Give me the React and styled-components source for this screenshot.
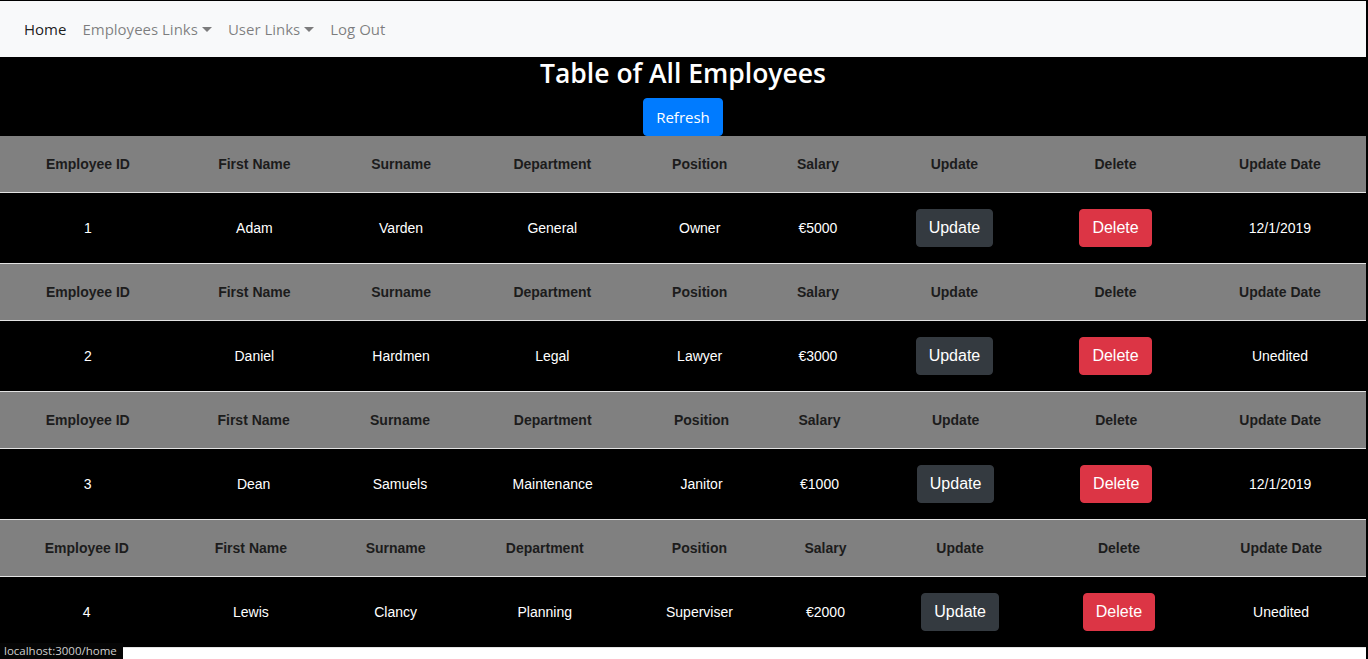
import styled, {createGlobalStyle} from "styled-components";

const GlobalStyle = createGlobalStyle`
    html {
        background: #000;
    }
    body {
        margin: 0 2px 0 0;
        min-height: 100vh;
        background: #fff;
        font-family: "Open Sans", "Noto Sans", sans-serif;
        font-size: 16px;
        line-height: 1.5;
        color: #212529;
    }
`

const Page = styled.div`
    border-top: 1px solid #000;
`

const Navbar = styled.nav`
    display: flex;
    align-items: center;
    padding: 8px 16px;
    background: #f8f9fa;
`

const NavLink = styled.a`
    display: flex;
    align-items: center;
    padding: 8px;
    font-size: 15px;
    line-height: 24px;
    color: ${props => props.active ? "rgba(0, 0, 0, 0.9)" : "rgba(0, 0, 0, 0.5)"};
    text-decoration: none;
    cursor: pointer;
`

const Caret = styled.span`
    display: inline-block;
    margin-left: 4px;
    border-top: 5px solid currentColor;
    border-left: 5px solid transparent;
    border-right: 5px solid transparent;
`

const Main = styled.main`
    background: #000;
    text-align: center;
`

const Title = styled.h3`
    margin: 0 0 8px;
    font-size: 26.5px;
    font-weight: 600;
    line-height: 33px;
    color: #fff;
`

const Button = styled.button`
    display: inline-block;
    padding: 6px 12px;
    border: 1px solid ${props => props.bg};
    border-radius: 4px;
    background: ${props => props.bg};
    color: #fff;
    font-family: inherit;
    font-size: 16px;
    line-height: 24px;
    cursor: pointer;
`

const RefreshButton = styled(Button)`
    font-size: 15px;
`

const Table = styled.table`
    width: 100%;
    border-collapse: collapse;
    font-family: "Liberation Sans", Arial, sans-serif;
    font-size: 14px;
    line-height: 24px;
`

const HeadRow = styled.tr`
    background: #808080;
    border-bottom: 1px solid #e3e3e3;
`

const Row = styled.tr`
    background: #000;
    border-bottom: 1px solid #e3e3e3;
`

const Th = styled.th`
    padding: 16px 12px;
    font-weight: bold;
    color: #1c1c1c;
`

const Td = styled.td`
    padding: 16px 12px;
    color: #fff;
`

const StatusBar = styled.div`
    position: fixed;
    left: 0;
    bottom: 0;
    padding: 0 6px 0 4px;
    height: 16px;
    background: #050505;
    color: #cfcfcf;
    font-size: 11.5px;
    line-height: 16px;
`

const headers = ["Employee ID", "First Name", "Surname", "Department", "Position", "Salary", "Update", "Delete", "Update Date"];

const employees = [
    {id: 1, first: "Adam", surname: "Varden", department: "General", position: "Owner", salary: 5000, date: "12/1/2019"},
    {id: 2, first: "Daniel", surname: "Hardmen", department: "Legal", position: "Lawyer", salary: 3000, date: "Unedited"},
    {id: 3, first: "Dean", surname: "Samuels", department: "Maintenance", position: "Janitor", salary: 1000, date: "12/1/2019"},
    {id: 4, first: "Lewis", surname: "Clancy", department: "Planning", position: "Superviser", salary: 2000, date: "Unedited"},
];

function EmployeeTable({employee}) {
    return <Table>
        <thead>
            <HeadRow>
                {headers.map(h => <Th key={h}>{h}</Th>)}
            </HeadRow>
        </thead>
        <tbody>
            <Row>
                <Td>{employee.id}</Td>
                <Td>{employee.first}</Td>
                <Td>{employee.surname}</Td>
                <Td>{employee.department}</Td>
                <Td>{employee.position}</Td>
                <Td>€{employee.salary}</Td>
                <Td><Button bg="#343a40">Update</Button></Td>
                <Td><Button bg="#dc3545">Delete</Button></Td>
                <Td>{employee.date}</Td>
            </Row>
        </tbody>
    </Table>
}

export default function App() {
    return <Page>
        <GlobalStyle />
        <Navbar>
            <NavLink active>Home</NavLink>
            <NavLink>Employees Links<Caret /></NavLink>
            <NavLink>User Links<Caret /></NavLink>
            <NavLink>Log Out</NavLink>
        </Navbar>
        <Main>
            <Title>Table of All Employees</Title>
            <RefreshButton bg="#007bff">Refresh</RefreshButton>
            {employees.map(e => <EmployeeTable key={e.id} employee={e} />)}
        </Main>
        <StatusBar>localhost:3000/home</StatusBar>
    </Page>
}
